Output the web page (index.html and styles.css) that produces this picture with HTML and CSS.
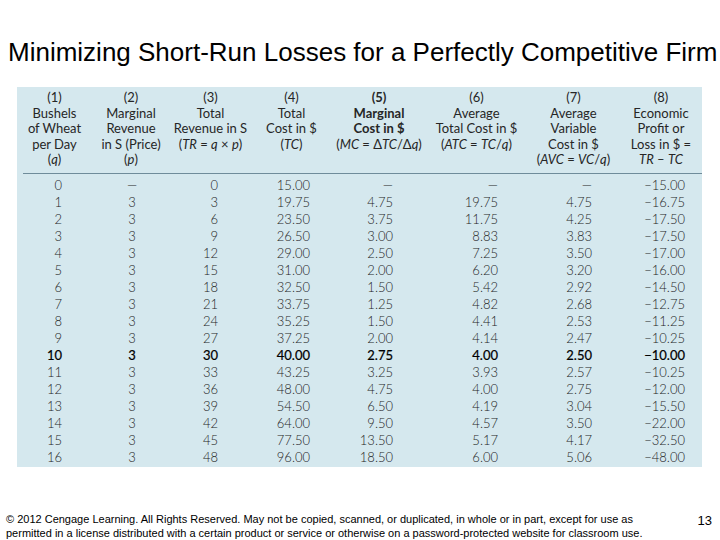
FILE: index.html
```html
<!DOCTYPE html>
<html lang="en">
<head>
<meta charset="utf-8">
<title>Minimizing Short-Run Losses for a Perfectly Competitive Firm</title>
<link rel="stylesheet" href="styles.css">
</head>
<body>
<h1 class="title">Minimizing Short-Run Losses for a Perfectly Competitive Firm</h1>
<div class="sheet">
  <div class="row head">
    <div class="hc"><span>(1)</span><span>Bushels</span><span>of Wheat</span><span>per Day</span><span>(<i>q</i>)</span></div>
    <div class="hc"><span>(2)</span><span>Marginal</span><span>Revenue</span><span>in S (Price)</span><span>(<i>p</i>)</span></div>
    <div class="hc"><span>(3)</span><span>Total</span><span>Revenue in S</span><span>(<i>TR</i> = <i>q</i> × <i>p</i>)</span></div>
    <div class="hc"><span>(4)</span><span>Total</span><span>Cost in $</span><span>(<i>TC</i>)</span></div>
    <div class="hc"><span class="b">(5)</span><span class="b">Marginal</span><span class="b">Cost in $</span><span>(<i>MC</i> = Δ<i>TC</i>/Δ<i>q</i>)</span></div>
    <div class="hc"><span>(6)</span><span>Average</span><span>Total Cost in $</span><span>(<i>ATC</i> = <i>TC</i>/<i>q</i>)</span></div>
    <div class="hc"><span>(7)</span><span>Average</span><span>Variable</span><span>Cost in $</span><span>(<i>AVC</i> = <i>VC</i>/<i>q</i>)</span></div>
    <div class="hc"><span>(8)</span><span>Economic</span><span>Profit or</span><span>Loss in $ =</span><span><i>TR</i> – <i>TC</i></span></div>
  </div>
  <div class="rule"></div>
  <div class="body">
    <div class="row"><span>0</span><span>—</span><span>0</span><span>15.00</span><span>—</span><span>—</span><span>—</span><span>−15.00</span></div>
    <div class="row"><span>1</span><span>3</span><span>3</span><span>19.75</span><span>4.75</span><span>19.75</span><span>4.75</span><span>−16.75</span></div>
    <div class="row"><span>2</span><span>3</span><span>6</span><span>23.50</span><span>3.75</span><span>11.75</span><span>4.25</span><span>−17.50</span></div>
    <div class="row"><span>3</span><span>3</span><span>9</span><span>26.50</span><span>3.00</span><span>8.83</span><span>3.83</span><span>−17.50</span></div>
    <div class="row"><span>4</span><span>3</span><span>12</span><span>29.00</span><span>2.50</span><span>7.25</span><span>3.50</span><span>−17.00</span></div>
    <div class="row"><span>5</span><span>3</span><span>15</span><span>31.00</span><span>2.00</span><span>6.20</span><span>3.20</span><span>−16.00</span></div>
    <div class="row"><span>6</span><span>3</span><span>18</span><span>32.50</span><span>1.50</span><span>5.42</span><span>2.92</span><span>−14.50</span></div>
    <div class="row"><span>7</span><span>3</span><span>21</span><span>33.75</span><span>1.25</span><span>4.82</span><span>2.68</span><span>−12.75</span></div>
    <div class="row"><span>8</span><span>3</span><span>24</span><span>35.25</span><span>1.50</span><span>4.41</span><span>2.53</span><span>−11.25</span></div>
    <div class="row"><span>9</span><span>3</span><span>27</span><span>37.25</span><span>2.00</span><span>4.14</span><span>2.47</span><span>−10.25</span></div>
    <div class="row best"><span>10</span><span>3</span><span>30</span><span>40.00</span><span>2.75</span><span>4.00</span><span>2.50</span><span>−10.00</span></div>
    <div class="row"><span>11</span><span>3</span><span>33</span><span>43.25</span><span>3.25</span><span>3.93</span><span>2.57</span><span>−10.25</span></div>
    <div class="row"><span>12</span><span>3</span><span>36</span><span>48.00</span><span>4.75</span><span>4.00</span><span>2.75</span><span>−12.00</span></div>
    <div class="row"><span>13</span><span>3</span><span>39</span><span>54.50</span><span>6.50</span><span>4.19</span><span>3.04</span><span>−15.50</span></div>
    <div class="row"><span>14</span><span>3</span><span>42</span><span>64.00</span><span>9.50</span><span>4.57</span><span>3.50</span><span>−22.00</span></div>
    <div class="row"><span>15</span><span>3</span><span>45</span><span>77.50</span><span>13.50</span><span>5.17</span><span>4.17</span><span>−32.50</span></div>
    <div class="row"><span>16</span><span>3</span><span>48</span><span>96.00</span><span>18.50</span><span>6.00</span><span>5.06</span><span>−48.00</span></div>
  </div>
</div>
<footer class="foot">
  <p class="legal">© 2012 Cengage Learning. All Rights Reserved. May not be copied, scanned, or duplicated, in whole or in part, except for use as<br>permitted in a license distributed with a certain product or service or otherwise on a password-protected website for classroom use.</p>
  <span class="page">13</span>
</footer>
</body>
</html>
```
FILE: styles.css
```css
html, body {
  margin: 0;
  padding: 0;
  background: #ffffff;
}
body {
  width: 720px;
  height: 540px;
  overflow: hidden;
  font-family: "Liberation Sans", Arial, sans-serif;
  color: #000;
}
.title {
  margin: 0;
  padding: 37px 0 0 8px;
  font-size: 26px;
  line-height: 30px;
  font-weight: normal;
  white-space: nowrap;
}
.sheet {
  margin: 20px 0 0 17px;
  width: 685px;
  height: 380px;
  background: #d5e8ee;
  font-family: Lato, "Open Sans", sans-serif;
  font-size: 13px;
  color: #262626;
}
.row {
  display: grid;
  grid-template-columns: 75px 78px 81px 81px 94px 101px 93px 82px;
}
.head {
  padding-top: 3px;
  padding-bottom: 5px;
  height: 77.5px;
}
.hc {
  display: flex;
  flex-direction: column;
  align-items: center;
  line-height: 15.5px;
  white-space: nowrap;
}
.hc .b {
  font-weight: bold;
}
.rule {
  height: 1px;
  margin-left: 6px;
  background: #6f8c9a;
}
.body {
  padding-top: 3.5px;
}
.body .row {
  line-height: 17px;
  height: 17px;
  color: #1e1e1e;
  font-weight: 300;
}
.body .row span {
  text-align: right;
  white-space: nowrap;
}
.body .row span:nth-child(1) { padding-right: 30px; }
.body .row span:nth-child(2) { text-align: center; padding-left: 2px; }
.body .row span:nth-child(3) { padding-right: 33px; }
.body .row span:nth-child(4) { padding-right: 22px; }
.body .row span:nth-child(5) { padding-right: 33px; }
.body .row span:nth-child(6) { padding-right: 29px; }
.body .row span:nth-child(7) { padding-right: 28px; }
.body .row span:nth-child(8) { padding-right: 17px; }
.body .row.best {
  font-weight: normal;
  color: #000;
  -webkit-text-stroke: 0.2px #000;
}
.foot {
  display: flex;
  justify-content: space-between;
  align-items: flex-start;
  margin-top: 45px;
  padding: 0 8px 0 6px;
}
.legal {
  margin: 0;
  font-size: 11px;
  line-height: 14px;
  white-space: nowrap;
}
.page {
  font-size: 13px;
  line-height: 16px;
  margin-top: 1px;
}
```
